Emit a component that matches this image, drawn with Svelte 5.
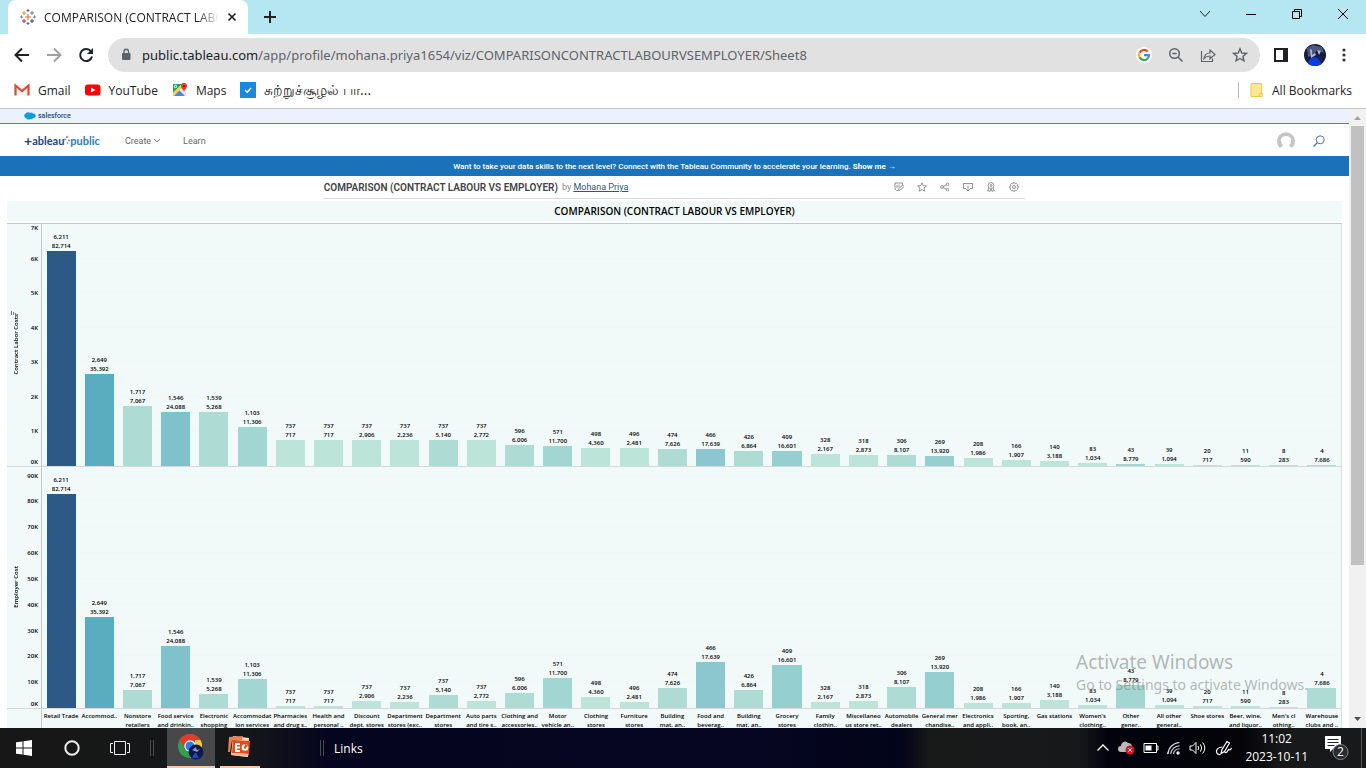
<script>
  const rows = [
    ['Retail Trade', '', 6211, 82714],
    ['Accommod..', '', 2649, 35392],
    ['Nonstore', 'retailers', 1717, 7067],
    ['Food service', 'and drinkin..', 1546, 24088],
    ['Electronic', 'shopping', 1539, 5268],
    ['Accommodat', 'ion services', 1103, 11306],
    ['Pharmacies', 'and drug s..', 737, 717],
    ['Health and', 'personal ..', 737, 717],
    ['Discount', 'dept. stores', 737, 2906],
    ['Department', 'stores (exc..', 737, 2236],
    ['Department', 'stores', 737, 5140],
    ['Auto parts', 'and tire s..', 737, 2772],
    ['Clothing and', 'accessories..', 596, 6006],
    ['Motor', 'vehicle an..', 571, 11700],
    ['Clothing', 'stores', 498, 4360],
    ['Furniture', 'stores', 496, 2481],
    ['Building', 'mat. an..', 474, 7626],
    ['Food and', 'beverag..', 466, 17639],
    ['Building', 'mat. an..', 426, 6864],
    ['Grocery', 'stores', 409, 16601],
    ['Family', 'clothin..', 328, 2167],
    ['Miscellaneo', 'us store ret..', 318, 2873],
    ['Automobile', 'dealers', 306, 8107],
    ['General mer', 'chandise..', 269, 13920],
    ['Electronics', 'and appli..', 208, 1986],
    ['Sporting,', 'book, an..', 166, 1907],
    ['Gas stations', '', 140, 3188],
    ["Women's", 'clothing..', 83, 1034],
    ['Other', 'gener..', 43, 8779],
    ['All other', 'general..', 39, 1094],
    ['Shoe stores', '', 20, 717],
    ['Beer, wine,', 'and liquor..', 11, 590],
    ["Men's cl", 'othing..', 8, 283],
    ['Warehouse', 'clubs and ..', 4, 7686]
  ];

  const shades = [
    [80000, '#2c5985'],
    [30000, '#5aacbf'],
    [20000, '#80c2cc'],
    [17000, '#8cc7cf'],
    [13000, '#95cfd0'],
    [8500, '#a2d6d2'],
    [5000, '#aedcd5'],
    [0, '#bce4d8']
  ];
  const shade = (v) => shades.find(([min]) => v >= min)[1];
  const fmt = (n) => n.toLocaleString('en-US');

  const panels = [
    { title: 'Contract Labor Costs', col: 2, max: 7000, step: 1000, count: 7, unit: 1 },
    { title: 'Employer Cost', col: 3, max: 93500, step: 10000, count: 9, unit: 10 }
  ].map((p) => ({
    ...p,
    ticks: Array.from({ length: p.count + 1 }, (_, i) => ({
      label: `${i * p.unit}K`,
      pos: (i * p.step * 100) / p.max
    }))
  }));
</script>

<div class="screen">
  <header class="tabs">
    <div class="tab">
      <svg width="16" height="16" viewBox="0 0 16 16" fill="none">
        <path d="M8 5v6M5 8h6" stroke="#e8762d" stroke-width="1.2" />
        <path d="M4 2v4M2 4h4" stroke="#eb912c" />
        <path d="M12 2v4M10 4h4" stroke="#59879b" />
        <path d="M4 10v4M2 12h4" stroke="#c72035" />
        <path d="M12 10v4M10 12h4" stroke="#1f447e" />
        <path d="M8 0v3M6.500 1.500h3M8 13v3M6.500 14.500h3" stroke="#5b6591" />
        <path d="M1.500 6.500v3M0 8h3M14.500 6.500v3M13 8h3" stroke="#7b85b8" />
      </svg>
      <span class="tab-title">COMPARISON (CONTRACT LABOUR</span>
      <button aria-label="Close tab">
        <svg width="10" height="10" viewBox="0 0 10 10"><path d="M1.500 1.500l7 7m0-7l-7 7" stroke="#222" stroke-width="1.700" /></svg>
      </button>
    </div>
    <button class="new-tab" aria-label="New tab">
      <svg width="14" height="14" viewBox="0 0 14 14"><path d="M7 1v12M1 7h12" stroke="#222" stroke-width="2" /></svg>
    </button>
    <div class="window-controls">
      <button aria-label="Search tabs"><svg width="12" height="12" viewBox="0 0 12 12" fill="none" stroke="#222"><path d="M1 3l5 5.500L11 3" /></svg></button>
      <button aria-label="Minimize"><svg width="12" height="12" viewBox="0 0 12 12" stroke="#000"><path d="M1 6.500h10" /></svg></button>
      <button aria-label="Restore"><svg width="12" height="12" viewBox="0 0 12 12" fill="none" stroke="#000"><path d="M1.500 3.500h7v7h-7zM3.500 3.500v-2h7v7h-2" /></svg></button>
      <button aria-label="Close"><svg width="12" height="12" viewBox="0 0 12 12" stroke="#000"><path d="M1 1l10 10M11 1L1 11" /></svg></button>
    </div>
  </header>

  <div class="toolbar">
    <button aria-label="Back"><svg width="16" height="16" viewBox="0 0 16 16" fill="none" stroke="#202124" stroke-width="2"><path d="M15 8H2M8 1.500L1.500 8 8 14.500" /></svg></button>
    <button aria-label="Forward"><svg width="16" height="16" viewBox="0 0 16 16" fill="none" stroke="#a0a0a0" stroke-width="2"><path d="M1 8h13M8 1.500L14.500 8 8 14.500" /></svg></button>
    <button aria-label="Reload"><svg width="16" height="16" viewBox="0 0 16 16"><path d="M13 4.500A6 6 0 1 0 14 9.500" fill="none" stroke="#202124" stroke-width="2" /><path d="M15 1v6H9z" fill="#202124" /></svg></button>
    <div class="omnibox">
      <svg width="10" height="14" viewBox="0 0 10 14"><rect x="1" y="5" width="8.500" height="7" rx="1" fill="#5f6368" /><path d="M3 5.500V3.500a2.250 2.250 0 0 1 4.500 0v2" fill="none" stroke="#5f6368" stroke-width="1.300" /></svg>
      <a class="url" href="#viz"><b>public.tableau.com</b>/app/profile/mohana.priya1654/viz/COMPARISONCONTRACTLABOURVSEMPLOYER/Sheet8</a>
      <div class="omni-icons">
        <button aria-label="Google"><svg width="16" height="16" viewBox="0 0 16 16" fill="none" stroke-width="2.200"><circle cx="8" cy="8" r="8" fill="#fff" /><path d="M11.700 4.500A5 5 0 0 0 3.600 5.700" stroke="#ea4335" /><path d="M3.600 5.700a5 5 0 0 0 0 4.600" stroke="#fbbc05" /><path d="M3.600 10.300a5 5 0 0 0 7.800 1.400" stroke="#34a853" /><path d="M11.400 11.700A4.600 4.600 0 0 0 12.900 8.100H8" stroke="#4285f4" /></svg></button>
        <button aria-label="Zoom"><svg width="16" height="16" viewBox="0 0 16 16" fill="none" stroke="#5f6368" stroke-width="1.500"><circle cx="6.500" cy="6.500" r="4.800" /><path d="M10 10l4.500 4.500M4.300 6.500h4.400" /></svg></button>
        <button aria-label="Share"><svg width="16" height="16" viewBox="0 0 16 16" fill="none" stroke="#5f6368" stroke-width="1.200"><path d="M1.500 4v10.500h11V11.500" /><path d="M4 11.500c.5-4 2.500-5.500 6-5.500V3l5 4.500-5 4.300V9c-3 0-4.500.7-6 2.500z" /></svg></button>
        <button aria-label="Bookmark this tab"><svg width="16" height="16" viewBox="0 0 16 16" fill="none" stroke="#5f6368" stroke-width="1.400"><path d="M8 1.800l1.800 4.200 4.600.4-3.500 3 1.100 4.500L8 11.500l-4 2.400 1.100-4.500-3.500-3 4.600-.4z" /></svg></button>
      </div>
    </div>
    <button aria-label="Side panel"><svg width="14" height="14" viewBox="0 0 14 14"><path d="M1 1h12v12H1z" fill="none" stroke="#202124" stroke-width="2" /><path d="M9 1h5v12H9z" fill="#202124" /></svg></button>
    <button aria-label="Profile"><svg width="22" height="22" viewBox="0 0 22 22"><defs><clipPath id="av"><circle cx="11" cy="11" r="11" /></clipPath></defs><g clip-path="url(#av)"><path d="M0 0h22v22H0z" fill="#171b3d" /><path d="M3 4l6-3 9 2 2 6-7-3-3 5-6 2z" fill="#4a5780" /><path d="M6 5l2 1v5l3-2 1 2-5 3zM13 6l4 1-2 4z" fill="#b1b8cf" /><path d="M4 22q-1-8 7-9 6 2 7 9z" fill="#0b3ee0" /><path d="M12 11l4 1 4 8-3-1zM1 11l3 2-2 6z" fill="#18244c" /></g></svg></button>
    <button aria-label="Menu"><svg width="4" height="14" viewBox="0 0 4 14" fill="#333"><circle cx="2" cy="2" r="1.600" /><circle cx="2" cy="7" r="1.600" /><circle cx="2" cy="12" r="1.600" /></svg></button>
  </div>

  <nav class="bookmarks" aria-label="Bookmarks">
    <a href="#gmail"><svg width="16" height="16" viewBox="0 0 16 16"><path d="M2 3h12v10H2z" fill="#f5f0ee" /><path d="M1.500 13.500V3.500L8 9l6.500-5.500v10" fill="none" stroke="#d54b3d" stroke-width="2.200" /></svg>Gmail</a>
    <a href="#youtube"><svg width="16" height="16" viewBox="0 0 16 16"><rect x="0" y="2.500" width="15.500" height="11" rx="3" fill="#f00" /><path d="M6 5.500v5L10.500 8z" fill="#fff" /></svg>YouTube</a>
    <a href="#maps"><svg width="16" height="16" viewBox="0 0 16 16"><path d="M1 2h13v12H1z" fill="#e6e7e8" /><path d="M1 2h9L1 11z" fill="#1fa463" /><path d="M1 14l6-6 6 6z" fill="#4285f4" /><path d="M1 11l8-8 2 2-9 9H1z" fill="#ffd04b" /><path d="M12 10C11.500 7.500 9 6.500 9 4a3 3 0 0 1 6 0c0 2.500-2.500 3.500-3 6z" fill="#e33b2e" /><circle cx="12" cy="4" r="1" fill="#81261e" /><circle cx="3.500" cy="4.500" r="1.200" fill="none" stroke="#fff" /></svg>Maps</a>
    <a class="tamil" href="#env"><svg width="16" height="16" viewBox="0 0 16 16"><path d="M0 0h16v16H0z" fill="#1c87dc" /><path d="M5 8l2.200 2.200L11 6" fill="none" stroke="#fff" stroke-width="1.500" /></svg>சுற்றுச்சூழல் பா...</a>
    <a class="all" href="#all"><svg width="14" height="16" viewBox="0 0 14 16"><path d="M1 1.500h10.500v9.500h1v3.500H1z" fill="#ffe793" stroke="#ecc94f" /><path d="M9.500 14.500V11.500h2" fill="none" stroke="#ecc94f" /></svg>All Bookmarks</a>
  </nav>

  <div class="viewport">
    <main id="viz">
      <div class="salesforce">
        <svg width="12" height="8" viewBox="0 0 12 8" fill="#0d9dda"><circle cx="2.600" cy="3.800" r="2.400" /><circle cx="4" cy="2.400" r="2.200" /><circle cx="7" cy="2.500" r="2.100" /><circle cx="9.400" cy="3.800" r="2.300" /><circle cx="4.500" cy="5.400" r="2.200" /><circle cx="7.300" cy="5.300" r="1.900" /></svg>
        salesforce
      </div>
      <div class="site">
        <a class="logo" href="#home" aria-label="tableau public"><span class="plus">+</span><span class="dark">ableau</span><svg width="6" height="10" viewBox="0 0 6 10" stroke-width="1"><path d="M3 0v2M2 1h2" stroke="#e0603a" /><path d="M0 3.500h2M1 2.500v2M4 4.500h2M5 3.500v2" stroke="#7199c4" /><path d="M2.500 7h2M3.500 6v2" stroke="#eb8f53" /></svg><span class="light">public</span></a>
        <button class="create">Create <svg width="8" height="5" viewBox="0 0 8 5" fill="none" stroke="#777"><path d="M1 1l3 3 3-3" /></svg></button>
        <a class="learn" href="#learn">Learn</a>
        <button class="user" aria-label="Account"><svg width="18" height="18" viewBox="0 0 18 18"><path d="M3 16A9 9 0 1 1 15 16l-3-2.500q2.500-2 2-6Q13.500 4 9 4T4 7.500q-.5 4 2 6z" fill="#c5c5c5" /></svg></button>
        <button aria-label="Search"><svg width="12" height="12" viewBox="0 0 12 12" fill="none" stroke="#4c75b5"><circle cx="7.200" cy="4.800" r="4" /><path d="M4.300 7.700L.5 11.500" stroke-width="1.300" /></svg></button>
      </div>
      <div class="banner">Want to take your data skills to the next level? Connect with the Tableau Community to accelerate your learning.&nbsp;<a href="#show"><b>Show me</b> →</a></div>

      <div class="viz-head">
        <h1>COMPARISON (CONTRACT LABOUR VS EMPLOYER)</h1>
        <span class="by">by <a href="#author">Mohana Priya</a></span>
        <div class="actions">
          <button aria-label="Edit"><svg width="10" height="10" viewBox="0 0 10 10"><path d="M4 8.500H2.500L1 7V1h7.500v2M3 3v3M5 2.500v3M4.500 8.500l.5-2L8.500 3 10 4.500 6.500 8z" /></svg></button>
          <button aria-label="Favorite"><svg width="10" height="10" viewBox="0 0 10 10"><path d="M5 .8l1.200 2.900 3.200.2L7 6l.8 3.200L5 7.500 2.200 9.200 3 6 .6 3.900l3.200-.2z" /></svg></button>
          <button aria-label="Share"><svg width="10" height="10" viewBox="0 0 10 10"><circle cx="2" cy="5" r="1.400" /><circle cx="7.500" cy="2.300" r="1.300" /><circle cx="7.500" cy="7.700" r="1.300" /><path d="M3.200 4.400l3.200-1.600M3.200 5.600l3.200 1.600" /></svg></button>
          <button aria-label="Download"><svg width="10" height="10" viewBox="0 0 10 10"><path d="M3 6.500H.5v-5h9v5H7M5 3.500V9M3.300 7.300L5 9l1.700-1.700" /></svg></button>
          <button aria-label="Nominate"><svg width="10" height="10" viewBox="0 0 10 10"><circle cx="5" cy="3.500" r="3" /><circle cx="5" cy="3.500" r="1" /><path d="M3 6L1.500 9l1.500-.3L4 9.500 5 7l1 2.500 1-.8 1.500.3L7 6" /></svg></button>
          <button aria-label="Settings"><svg width="10" height="10" viewBox="0 0 10 10"><circle cx="5" cy="5" r="1.500" /><path d="M4.200 .7h1.600l.4 1.200 1.200-.5 1.200 1.200-.5 1.200 1.200.4v1.600l-1.200.4.5 1.200-1.200 1.200-1.200-.5-.4 1.200H4.200l-.4-1.200-1.200.5-1.200-1.200.5-1.200-1.200-.4V4.200l1.200-.4-.5-1.200 1.200-1.200 1.200.5z" /></svg></button>
        </div>
      </div>

      <section class="sheet">
        <h2>COMPARISON (CONTRACT LABOUR VS EMPLOYER)</h2>
        <div class="chart">
          {#each panels as p, i}
            <div class="axis">
              <span class="axis-title">{p.title}</span>
              {#if i === 0}
                <svg class="sort" width="8" height="6" viewBox="0 0 8 6" stroke="#777" stroke-width="1"><path d="M.5 0v4M2.500 1v3M4.500 2v2M6.500 3v2" /></svg>
              {/if}
              {#each p.ticks as t, k}
                <span class="tick" class:first={k === 0} class:last={k === p.count && i === 0} style:bottom="{t.pos}%">{t.label}</span>
              {/each}
            </div>
            <div class="plot">
              {#each p.ticks.slice(1) as t}
                <i class="grid-line" style:bottom="{t.pos}%"></i>
              {/each}
              {#each rows as r}
                <div class="slot">
                  <span class="value">{fmt(r[2])}<br />{fmt(r[3])}</span>
                  <div class="bar" style:height="{(r[p.col] * 100) / p.max}%" style:background={shade(r[3])}></div>
                </div>
              {/each}
            </div>
          {/each}
          <div class="corner"></div>
          <div class="names">
            {#each rows as r}
              <span>{r[0]}<br />{r[1]}</span>
            {/each}
          </div>
        </div>
      </section>
    </main>

    <div class="scrollbar">
      <svg width="17" height="17" viewBox="0 0 17 17"><path d="M5 11l3.500-4 3.500 4z" fill="#a3a3a3" /></svg>
      <div class="track"><div class="thumb"></div></div>
      <svg width="17" height="17" viewBox="0 0 17 17"><path d="M5 6l3.500 4L12 6z" fill="#505050" /></svg>
    </div>

    <div class="watermark"><strong>Activate Windows</strong><span>Go to Settings to activate Windows.</span></div>
  </div>

  <footer class="taskbar">
    <button class="sys" aria-label="Start"><svg width="16" height="16" viewBox="0 0 16 16" fill="#fff"><path d="M0 2.300l6.500-.9v6.100H0zM7.500 1.200L16 0v7.500H7.500zM0 8.500h6.500v6.100L0 13.700zM7.500 8.500H16V16l-8.500-1.200z" /></svg></button>
    <button class="sys" aria-label="Search"><svg width="16" height="16" viewBox="0 0 16 16"><circle cx="8" cy="8" r="6.700" fill="none" stroke="#eee" stroke-width="2" /></svg></button>
    <button class="sys" aria-label="Task view"><svg width="20" height="14" viewBox="0 0 20 14" fill="none" stroke="#eee"><path d="M4.500.5h11v13h-11zM3 2.500H.5v9H3M17 2.500h2.500v9H17" /></svg></button>
    <i class="grip"></i>
    <button class="app active" aria-label="Chrome">
      <svg width="26" height="26" viewBox="0 0 26 26"><circle cx="12" cy="12" r="12" fill="#2fa24d" /><path d="M1.600 6A12 12 0 0 1 22.400 6L12 7 7 15z" fill="#e33b2e" /><path d="M22.400 6A12 12 0 0 1 12 24l5-9V6z" fill="#fcc934" /><circle cx="12" cy="12" r="5.700" fill="#fff" /><circle cx="12" cy="12" r="4.500" fill="#2a7de9" /><circle cx="18" cy="18" r="7.500" fill="#10184a" /><path d="M14 16l4-3 1 3 3-1-3 3zM15 22l3-3 2 5z" fill="#8592c7" /><path d="M14 24l4-5 3 5z" fill="#174ad8" /></svg>
    </button>
    <button class="app" aria-label="PowerPoint">
      <svg width="24" height="24" viewBox="0 0 24 24"><path d="M5 1l16 2-1 19L3 20z" fill="#fbd5c5" /><path d="M1 2l14-1-1 4H4l-2 12H0z" fill="#ee8055" /><path d="M5 5l17 1-1 13-17-1z" fill="#df4c1c" /><path d="M7 8h5v2H9v1.500h3v2H9V15h3v2H7z" fill="#fff" /><circle cx="17" cy="12.500" r="3.300" fill="#fff" /><circle cx="17" cy="12.500" r="1.200" fill="#df4c1c" /><path d="M17 12.500V9l3.500 2z" fill="#df4c1c" /><path d="M3 18l18 1-2 3-16-2z" fill="#f5b79d" /></svg>
    </button>
    <i class="grip second"></i>
    <span class="links">Links</span>
    <div class="tray">
      <svg width="14" height="10" viewBox="0 0 14 10" fill="none" stroke="#fff" stroke-width="1.300"><path d="M1.500 7.500L7 2l5.500 5.500" /></svg>
      <svg width="17" height="14" viewBox="0 0 17 14"><path d="M3 11a3 3 0 0 1 0-6 4 4 0 0 1 7-3 4 4 0 0 1 4 4v5z" fill="#b9b9b9" /><circle cx="12" cy="9" r="4.500" fill="#d9162b" /><path d="M10.300 7.300l3.400 3.400m0-3.400l-3.400 3.400" stroke="#fff" /></svg>
      <svg width="16" height="10" viewBox="0 0 16 10"><path d="M1 .5h12.500v9H1zM14 3h1v4h-1" fill="none" stroke="#fff" /><path d="M2.500 2.500h6v5h-6z" fill="#fff" /></svg>
      <svg width="14" height="14" viewBox="0 0 14 14" fill="none" stroke="#ddd" stroke-width="1.100"><path d="M1 13A12 12 0 0 1 12.500 1.500M3.800 13A9 9 0 0 1 12.500 4.700M6.500 13a6 6 0 0 1 6-5.300" /><circle cx="11" cy="12" r="1.200" fill="#fff" /><path d="M1 13l-.5-1.500" /></svg>
      <svg width="18" height="14" viewBox="0 0 18 14" fill="none" stroke="#fff"><path d="M1 5v4h2.500L7 12.500v-11L3.500 5zM9 5q1.500 2 0 4M11.300 3.300q2.800 3.700 0 7.400M13.700 1.500q4.300 5.500 0 11" /></svg>
      <svg width="18" height="16" viewBox="0 0 18 16" fill="none" stroke="#fff" stroke-width="1.200"><path d="M6 13.500L7 9.500 12 1.500 14.500 3 9.500 11.500zM7 7Q1 8 1.500 12q.5 3 4 2.500M9.500 11.500q1 2 2.500.5l1.500-2.500q2 1 3-1.500" /></svg>
      <time>11:02<br />2023-10-11</time>
      <button aria-label="Notifications"><svg width="26" height="26" viewBox="0 0 26 26"><path d="M1 1h16v13H9l-3 3v-3H1z" fill="#fff" /><path d="M3.500 4.500h11M3.500 7.500h11M3.500 10.500h7" stroke="#222" /><circle cx="16.500" cy="17" r="7.500" fill="#2c2c2e" stroke="#858585" /><text x="16.500" y="21" text-anchor="middle" font-size="12" fill="#fff">2</text></svg></button>
      <i class="peek"></i>
    </div>
  </footer>
</div>

<style>
  :global(body) { margin: 0; }
  .screen { height: 100vh; display: flex; flex-direction: column; overflow: hidden; background: #fff; color: #222; font-family: "Open Sans", "Noto Sans", sans-serif; font-size: 12px; }
  .screen * { box-sizing: border-box; }
  button { border: 0; padding: 0; background: none; font: inherit; color: inherit; display: flex; align-items: center; justify-content: center; flex: none; }
  a { color: inherit; text-decoration: none; }
  svg { display: block; flex: none; }

  .tabs { display: flex; height: 34px; flex: none; background: #b4e7f2; padding-left: 8px; }
  .tab { display: flex; align-items: center; width: 240px; background: #fff; border-radius: 8px 8px 0 0; padding: 0 11px 0 12px; gap: 8px; }
  .tab-title { flex: 1; min-width: 0; overflow: hidden; white-space: nowrap; mask-image: linear-gradient(90deg, #000 88%, transparent); }
  .new-tab { width: 44px; }
  .window-controls { display: flex; margin-left: auto; height: 28px; }
  .window-controls button { width: 46px; }

  .toolbar { display: flex; align-items: center; height: 42px; flex: none; padding: 0 20px 0 14px; gap: 16px; }
  .omnibox { flex: 1; min-width: 0; height: 34px; display: flex; align-items: center; border-radius: 17px; background: #e1e1e1; padding: 0 12px 0 13px; gap: 11px; margin: 0 -2px; }
  .url { flex: 1; min-width: 0; overflow: hidden; white-space: nowrap; font-family: "Noto Sans", sans-serif; font-size: 13px; color: #5f6368; }
  .url b { font-weight: 400; color: #202124; }
  .omni-icons { display: flex; gap: 16px; }

  .bookmarks { display: flex; align-items: center; height: 32px; flex: none; gap: 14px; padding: 0 14px 4px; }
  .bookmarks a { display: flex; align-items: center; gap: 8px; white-space: nowrap; }
  .bookmarks .tamil { font-size: 14px; line-height: 20px; }
  .bookmarks .all { margin-left: auto; border-left: 1px solid #bbb; padding-left: 11px; }

  .viewport { flex: 1; min-height: 0; display: flex; position: relative; border-top: 1px solid #c8c8c8; font-family: Roboto, sans-serif; font-size: 9px; }
  main { flex: 1; min-width: 0; display: flex; flex-direction: column; }
  .salesforce { display: flex; align-items: center; gap: 2px; height: 15px; flex: none; background: #eaf2fd; border-bottom: 1px solid #0d9dda; padding-left: 24px; color: #25497c; font-size: 7px; font-weight: 500; }
  .site { display: flex; align-items: center; height: 32px; flex: none; padding: 1px 24px 0; color: #666; }
  .logo { display: flex; align-items: center; font-family: Lato, sans-serif; font-size: 11px; line-height: 12px; font-weight: 700; }
  .plus { color: #1f447e; font-size: 14px; }
  .dark { color: #1f447e; }
  .light { color: #2a7bbf; }
  .create { gap: 2px; margin-left: 25px; }
  .learn { margin-left: 22px; }
  .user { margin: 0 18px 0 auto; }
  .banner { display: flex; align-items: center; justify-content: center; height: 20px; flex: none; background: #1a73ba; color: #fff; white-space: nowrap; font-size: 8px; font-weight: 500; }

  .viz-head { display: flex; align-items: center; width: 52%; max-width: 800px; height: 23px; flex: none; margin: 0 auto; border-bottom: 1px solid #d8d8d8; white-space: nowrap; }
  .viz-head h1 { margin: 0 4px 0 0; font-size: 10px; font-weight: 600; color: #444; }
  .by { color: #888; }
  .by a { color: #1f5a85; text-decoration: underline; }
  .actions { display: flex; gap: 13px; margin-left: auto; padding-right: 6px; }
  .actions svg { fill: none; stroke: #777; stroke-width: 0.8; }

  .sheet { flex: 1; min-height: 0; display: flex; flex-direction: column; margin: 2px 7px 0; font-family: "Open Sans", sans-serif; }
  .sheet h2 { margin: 0 0 2px; flex: none; height: 20px; line-height: 20px; text-align: center; background: #f1faf9; font-size: 10px; font-weight: 600; color: #000; }
  .chart { flex: 1; min-height: 0; display: grid; grid-template-columns: 35px 1fr; grid-template-rows: 1fr 1fr 19px; background: #f1faf9; border-top: 1px solid #c4c8c8; border-right: 1px solid #d9dfde; overflow: hidden; color: #000; font-size: 6px; line-height: 9px; font-weight: 600; }
  .axis { position: relative; border-right: 1px solid #c4c8c8; border-bottom: 1px solid #d4d9d8; display: flex; align-items: center; padding-left: 5px; }
  .axis-title { writing-mode: vertical-rl; rotate: 180deg; white-space: nowrap; }
  .sort { position: absolute; left: 4px; top: 87px; }
  .tick { position: absolute; right: 3px; margin-bottom: -5px; }
  .tick.first { margin-bottom: -1px; }
  .tick.last { margin-bottom: -9px; }
  .plot { position: relative; display: grid; grid-template-columns: repeat(34, minmax(0, 1fr)); border-bottom: 1px solid #d4d9d8; }
  .grid-line { position: absolute; left: 0; right: 0; height: 1px; background: #f1f7f6; }
  .slot { position: relative; display: flex; flex-direction: column; justify-content: flex-end; align-items: center; min-height: 0; }
  .value { text-align: center; flex: none; }
  .bar { width: 76%; flex: none; }
  .corner { border-right: 1px solid #c4c8c8; }
  .names { display: grid; grid-template-columns: repeat(34, minmax(0, 1fr)); padding-top: 3px; text-align: center; white-space: nowrap; overflow: hidden; }

  .scrollbar { width: 17px; flex: none; display: flex; flex-direction: column; background: #f1f1f1; }
  .track { flex: 1; padding: 0 2px; }
  .thumb { height: 75%; background: #c1c1c1; }

  .watermark { position: absolute; right: 58px; bottom: 33px; display: flex; flex-direction: column; color: rgba(120, 124, 124, 0.55); font-family: "Noto Sans", sans-serif; font-size: 14px; line-height: 20px; white-space: nowrap; }
  .watermark strong { font-size: 19px; line-height: 26px; font-weight: 400; }

  .taskbar { display: flex; align-items: center; height: 40px; flex: none; color: #fff; background: linear-gradient(90deg, #171717 0, #161719 18%, #05051f 24%, #060622 55%, #020418 66%, #181919 68%, #171819 79%, #02030d 81%, #040409 91%, #18191a 94%); }
  .sys { width: 48px; height: 40px; }
  .grip { width: 4px; height: 16px; border: solid #494949; border-width: 0 1px; margin: 0 13px 0 6px; }
  .grip.second { margin: 0 10px 0 60px; }
  .app { height: 40px; width: 40px; border-bottom: 2px solid #f9c9a7; }
  .app.active { width: 48px; background: #47484a; margin-right: 5px; }
  .links { font-size: 12px; }
  .tray { display: flex; align-items: center; align-self: stretch; margin-left: auto; gap: 8px; }
  .tray time { text-align: center; font-size: 12px; line-height: 18px; margin-left: 4px; }
  .tray button { margin-left: 8px; }
  .peek { align-self: stretch; width: 5px; border-left: 1px solid #555; margin-left: 3px; }
</style>
